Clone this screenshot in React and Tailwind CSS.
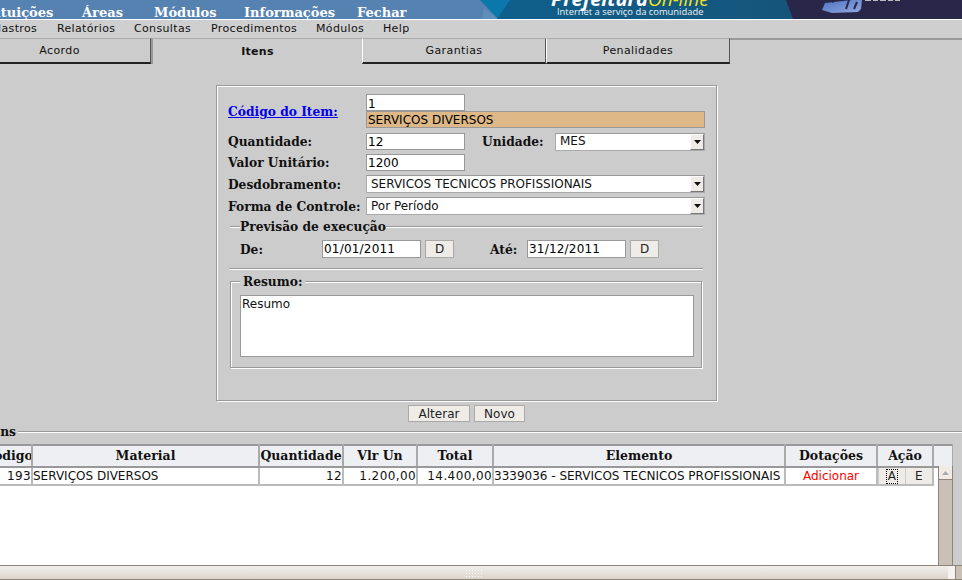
const serif = "font-['DejaVu_Serif',serif] font-bold";
const sans = "font-['DejaVu_Sans',sans-serif]";

function Label({ children, className = "" }) {
  return <div className={`${serif} text-[12.25px] leading-[17px] text-[#111] whitespace-nowrap ${className}`}>{children}</div>;
}
function Field({ children, className = "", sunken = "bg-white" }) {
  return (
    <div className={`${sans} ${sunken} border border-[#999] text-[12px] text-black whitespace-nowrap overflow-hidden px-[1px] box-content ${className}`}>
      {children}
    </div>
  );
}
function Btn({ children, className = "" }) {
  return (
    <div className={`${sans} flex items-center justify-center bg-[#efece8] border border-[#aaa] text-[12px] text-[#222] ${className}`}>
      {children}
    </div>
  );
}
function Select({ children, className = "" }) {
  return (
    <div className={`flex items-center bg-white h-[18px] border border-[#aaa] border-t-[#999] ${className}`}>
      <div className={`${sans} flex-1 text-[12px] leading-[14px] pl-[4px] text-[#111] whitespace-nowrap overflow-hidden -mt-[1px]`}>{children}</div>
      <div className="w-[14px] h-[16px] bg-[#efece8] border-t border-l border-t-white border-l-white border-r border-b border-r-[#777] border-b-[#777] flex items-center justify-center">
        <svg width="7" height="4" viewBox="0 0 7 4"><path d="M0 0h7L3.5 4z" fill="#111" /></svg>
      </div>
    </div>
  );
}
function Tab({ children, className = "" }) {
  return (
    <div className={`${sans} h-[26px] flex items-center justify-center bg-[#cccccc] border border-white border-t-[#aaa] border-l-white border-r-[#555] border-b-2 border-b-[#222] text-[11px] tracking-[0.4px] text-[#111] pt-[1px] ${className}`}>
      {children}
    </div>
  );
}
function Th({ children, w }) {
  return (
    <th style={{ width: w }} className={`${serif} text-[12.5px] leading-[16px] text-[#111] text-center bg-[#eeeff3] border-t-2 border-b-2 border-[#999] border-r-2 border-r-[#aaa] p-0 h-[22px] whitespace-nowrap overflow-hidden`}>
      {children}
    </th>
  );
}
function Td({ children, className = "" }) {
  return (
    <td className={`${sans} text-[12px] leading-[15px] text-[#111] border-r-2 border-r-[#bbb] border-b-2 border-b-[#bbb] p-0 h-[17px] whitespace-nowrap overflow-hidden ${className}`}>
      {children}
    </td>
  );
}

function Banner() {
  return (
    <svg width="482" height="19" viewBox="0 0 482 19" className="block">
      <defs>
        <linearGradient id="g" x1="0" x2="1" y1="0" y2="0">
          <stop offset="0" stopColor="#0f5f8c" />
          <stop offset="1" stopColor="#1a4f70" />
        </linearGradient>
        <linearGradient id="l" x1="0" x2="1" y1="0" y2="1">
          <stop offset="0" stopColor="#4c73c4" />
          <stop offset="1" stopColor="#93a9e0" />
        </linearGradient>
      </defs>
      <polygon points="0,0 482,0 482,19 18,19" fill="#0b78ac" />
      <polygon points="4,8 18,19 2,19" fill="#5f8fb8" />
      <polygon points="30,0 482,0 482,19 17,19" fill="url(#g)" />
      <polygon points="306,0 482,0 482,19 313,19" fill="#29264a" />
      <polygon points="345,3 372,0 382,0 381,9 378,12 352,13 342,10" fill="url(#l)" />
      <path d="M352 2l4-2M366 9l3-9M374 9l3-7" stroke="#29264a" strokeWidth="2" />
      <path d="M385 0h6M393 0h5M400 0h6M408 0h5M415 0h5" stroke="#ddd" strokeWidth="2" opacity="0.8" />
      <text x="71" y="6" fontFamily="'Open Sans',sans-serif" fontStyle="italic" fontWeight="700" fontSize="20" fill="#fff">Prefeitura</text>
      <text x="168" y="6" fontFamily="'Open Sans',sans-serif" fontStyle="italic" fontSize="19" fill="#f2e21c">On-line</text>
      <text x="77" y="15" fontFamily="'Open Sans',sans-serif" fontSize="9.4" fill="#eef3f6">Internet a serviço da comunidade</text>
    </svg>
  );
}

export default function App() {
  return (
    <div className="relative w-[962px] h-[580px] overflow-hidden bg-[#cccccc] flex flex-col">
      <div className="h-[20px] shrink-0 bg-[#5682b1] border-b border-white flex justify-between overflow-hidden">
        <div className={`${serif} flex text-[13px] leading-[19px] text-white whitespace-nowrap -ml-[33px] pt-[3px]`}>
          <span className="w-[115px]">Instituições</span>
          <span className="w-[72px]">Áreas</span>
          <span className="w-[90px]">Módulos</span>
          <span className="w-[114px]">Informações</span>
          <span className="-ml-[1px]">Fechar</span>
        </div>
        <Banner />
      </div>

      <div className={`${sans} h-[18px] shrink-0 bg-[#cfcfcf] border-b-2 border-[#999] box-content -mb-[1px] flex items-center text-[11px] tracking-[0.35px] text-[#111] whitespace-nowrap -ml-[21px]`}>
        <span className="w-[78px]">Cadastros</span>
        <span className="w-[77px]">Relatórios</span>
        <span className="w-[77px]">Consultas</span>
        <span className="w-[105px]">Procedimentos</span>
        <span className="w-[67px]">Módulos</span>
        <span>Help</span>
      </div>

      <div className="h-[26px] shrink-0 flex -ml-[32px] mt-[-1px]">
        <Tab className="w-[183px]">Acordo</Tab>
        <div className={`${sans} font-bold w-[211px] h-[26px] flex items-center justify-center bg-[#cccccc] border-l-2 border-l-[#999] border-t border-t-[#aaa] text-[11px] tracking-[0.3px] text-[#111] pt-[1px]`}>Itens</div>
        <Tab className="w-[184px]">Garantias</Tab>
        <Tab className="w-[184px]">Penalidades</Tab>
      </div>

      <div className="ml-[216px] mt-[21px] w-[501px] h-[316px] shrink-0 border border-[#999] shadow-[1px_1px_0_#fff,inset_1px_1px_0_#fff] pl-[11px] pt-[8px]">
        <div className="flex">
          <Label className="w-[138px] mt-[9px]"><span className="text-[#0000ee] underline">Código do Item:</span></Label>
          <div className="flex flex-col">
            <Field className="w-[95px] h-[13px] leading-[14px] pt-[2px]">1</Field>
            <Field className="w-[335px] h-[15px] leading-[17px]" sunken="bg-[#deb887]">SERVIÇOS DIVERSOS</Field>
          </div>
        </div>
        <div className="flex mt-[5px] items-center h-[17px]">
          <Label className="w-[138px]">Quantidade:</Label>
          <Field className="w-[95px] h-[15px] leading-[16px]">12</Field>
          <Label className="ml-[17px] w-[73px]">Unidade:</Label>
          <Select className="w-[150px]">MES</Select>
        </div>
        <div className="flex mt-[4px] items-center h-[17px]">
          <Label className="w-[138px]">Valor Unitário:</Label>
          <Field className="w-[95px] h-[15px] leading-[16px]">1200</Field>
        </div>
        <div className="flex mt-[4px] items-center h-[18px]">
          <Label className="w-[138px]">Desdobramento:</Label>
          <Select className="w-[339px]">SERVICOS TECNICOS PROFISSIONAIS</Select>
        </div>
        <div className="flex mt-[4px] items-center h-[18px]">
          <Label className="w-[138px]">Forma de Controle:</Label>
          <Select className="w-[339px]">Por Período</Select>
        </div>

        <div className="flex items-center mt-[3px] ml-[2px] w-[473px] h-[17px]">
          <div className="w-[10px] border-t border-[#999] shadow-[0_1px_0_#fff]" />
          <Label>Previsão de execução</Label>
          <div className="flex-1 border-t border-[#999] shadow-[0_1px_0_#fff]" />
        </div>

        <div className="flex items-center mt-[5px] h-[18px]">
          <Label className="ml-[12px] w-[82px]">De:</Label>
          <Field className="w-[95px] h-[16px] leading-[16px] tracking-[0.2px]">01/01/2011</Field>
          <Btn className="w-[29px] h-[18px] ml-[4px]">D</Btn>
          <Label className="ml-[36px] w-[37px]">Até:</Label>
          <Field className="w-[95px] h-[16px] leading-[16px] tracking-[0.2px]">31/12/2011</Field>
          <Btn className="w-[29px] h-[18px] ml-[4px]">D</Btn>
        </div>

        <div className="ml-[1px] w-[474px] mt-[10px] border-t border-[#999] shadow-[0_1px_0_#fff]" />

        <div className="relative ml-[2px] mt-[12px] w-[472px] h-[87px] border border-[#999] shadow-[1px_1px_0_#fff,inset_1px_1px_0_#fff] px-[9px] pt-[13px]">
          <Label className="absolute -top-[9px] left-[9px] bg-[#cccccc] px-[3px]">Resumo:</Label>
          <div className={`${sans} w-[454px] h-[62px] bg-white border border-[#999] text-[12px] leading-[15px] text-[#111] pl-[1px] pt-[1px]`}>Resumo</div>
        </div>
      </div>

      <div className="flex mt-[4px] ml-[408px] gap-[4px] h-[17px] shrink-0">
        <Btn className="w-[62px] pt-[1px]">Alterar</Btn>
        <Btn className="w-[51px] pt-[1px]">Novo</Btn>
      </div>

      <div className="flex items-center mt-[1px] h-[17px] shrink-0 -ml-[19px]">
        <Label className="pr-[2px]">Itens</Label>
        <div className="flex-1 border-t border-[#999] shadow-[0_1px_0_#fff]" />
      </div>

      <div className="flex-1 min-h-0 flex mt-[4px] -mb-[1px]">
        <div className="relative w-[953px] h-[121px] bg-white overflow-hidden shrink-0">
          <table className="table-fixed border-collapse -ml-[16px] w-[969px]">
            <thead>
              <tr>
                <Th w={48}>Código</Th>
                <Th w={227}>Material</Th>
                <Th w={84}>Quantidade</Th>
                <Th w={74}>Vlr Un</Th>
                <Th w={76}>Total</Th>
                <Th w={292}>Elemento</Th>
                <Th w={92}>Dotações</Th>
                <Th w={56}>Ação</Th>
                <Th w={20}></Th>
              </tr>
            </thead>
            <tbody>
              <tr>
                <Td className="text-right tracking-[0.4px]">193</Td>
                <Td>SERVIÇOS DIVERSOS</Td>
                <Td className="text-right tracking-[0.4px]">12</Td>
                <Td className="text-right tracking-[0.4px]">1.200,00</Td>
                <Td className="text-right tracking-[0.4px]">14.400,00</Td>
                <Td>3339036 - SERVICOS TECNICOS PROFISSIONAIS</Td>
                <Td className="text-center !text-[#ff0000]">Adicionar</Td>
                <td className="p-0 border-b-2 border-b-[#bbb] border-r-2 border-r-[#bbb] bg-[#cdcdcd]">
                  <div className="flex h-[16px]">
                    <Btn className="w-[26px] !border-0 ml-[1px]"><span className="border border-dotted border-black leading-[13px] px-[1px]">A</span></Btn>
                    <Btn className="w-[27px] !border-0 ml-[1px]">E</Btn>
                  </div>
                </td>
                <td className="p-0"></td>
              </tr>
            </tbody>
          </table>
          <div className="absolute right-0 top-[22px] bottom-0 w-[15px] bg-[#c9c0b6] border-x border-[#8d8377]">
            <div className="h-[14px] bg-[#efece8] border-b border-[#8d8377] flex items-center justify-center">
              <svg width="7" height="4" viewBox="0 0 7 4"><path d="M0 4h7L3.5 0z" fill="#aaa" /></svg>
            </div>
          </div>
        </div>
      </div>

      <div className="absolute left-0 right-0 bottom-0 h-[15px] border-y border-[#8d8377] bg-gradient-to-b from-[#f2efeb] to-[#dbd5cc] flex">
        <div className="flex-1 flex items-center justify-center pr-[2px]">
          <div className="w-[17px] h-[8px] bg-[radial-gradient(#fff_1px,transparent_1px)] bg-[length:3px_3px]" />
        </div>
        <div className="w-[7px] bg-[#f5f3f0]" />
        <div className="w-[7px] bg-[#c9c0b6] border-l border-[#8d8377]" />
      </div>
    </div>
  );
}
